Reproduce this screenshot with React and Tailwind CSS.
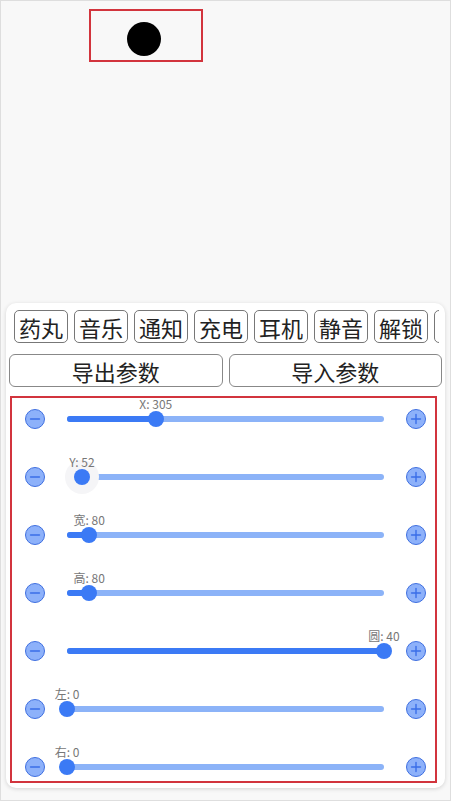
import React from 'react';

const chips = ['药丸', '音乐', '通知', '充电', '耳机', '静音', '解锁', ''];

const sliders = [
  { label: 'X', value: 305, pos: 0.28 },
  { label: 'Y', value: 52, pos: 0.047, halo: true },
  { label: '宽', value: 80, pos: 0.07 },
  { label: '高', value: 80, pos: 0.07 },
  { label: '圆', value: 40, pos: 1 },
  { label: '左', value: 0, pos: 0 },
  { label: '右', value: 0, pos: 0 },
];

const TRACK = 317;

function RoundBtn({ plus }) {
  return (
    <button className="w-5 h-5 shrink-0 rounded-full bg-[#8db1fa] border border-[#3f6fe0] flex items-center justify-center">
      <svg width="12" height="12" viewBox="0 0 12 12">
        <line x1="1.5" y1="6" x2="10.5" y2="6" stroke="#3a6ee8" strokeWidth="1.4" strokeLinecap="round" />
        {plus && <line x1="6" y1="1.5" x2="6" y2="10.5" stroke="#3a6ee8" strokeWidth="1.4" strokeLinecap="round" />}
      </svg>
    </button>
  );
}

function SliderRow({ s }) {
  const x = s.pos * TRACK;
  return (
    <div className="h-[58px] last:h-[36px] pt-[11px] shrink-0">
      <div className="flex items-center h-5">
        <div className="ml-[13px]">
          <RoundBtn />
        </div>
        <div className="relative ml-[22px] w-[317px] h-5 flex items-center">
          <div className="w-full h-[6px] rounded-full bg-[#8cb3f8]" />
          <div className="absolute left-0 h-[6px] rounded-full bg-[#3b7af5]" style={{ width: x }} />
          {s.halo && (
            <div className="absolute w-[34px] h-[34px] rounded-full bg-[#f5f5f7]" style={{ left: x - 17 }} />
          )}
          <div className="absolute w-4 h-4 rounded-full bg-[#3b7af5]" style={{ left: x - 8 }} />
          <div
            className="absolute top-[-12px] text-[12px] leading-[14px] text-[#777] whitespace-nowrap -translate-x-1/2"
            style={{ left: x }}
          >
            {s.label}: {s.value}
          </div>
        </div>
        <div className="ml-[22px]">
          <RoundBtn plus />
        </div>
      </div>
    </div>
  );
}

export default function App() {
  return (
    <div
      className="h-[801px] w-full bg-[#f8f8f8] border border-[#dedede] flex flex-col overflow-hidden"
      style={{ fontFamily: '"Noto Sans CJK SC", "Noto Sans", Roboto, sans-serif' }}
    >
      {/* preview box */}
      <div className="ml-[88px] mt-[8px] w-[114px] h-[53px] border-2 border-[#d2343d]">
        <div className="ml-[36px] mt-[11px] w-[34px] h-[34px] rounded-full bg-black" />
      </div>

      {/* control card */}
      <div className="mt-auto mx-[5px] mb-[12px] bg-white rounded-[10px] shadow-[0_1px_4px_rgba(0,0,0,0.15)] pt-[7px] pb-[5px]">
        <div className="flex gap-[6px] ml-[8px] mr-[6px] overflow-hidden">
          {chips.map((c, i) => (
            <button
              key={i}
              className="shrink-0 w-[54px] h-[33px] border border-[#777] rounded-[5px] text-[22px] leading-none text-[#222] flex items-center justify-center"
            >
              {c}
            </button>
          ))}
        </div>

        <div className="flex gap-[6px] px-[3px] mt-[11px]">
          <button className="flex-1 h-[33px] border border-[#888] rounded-[6px] text-[22px] leading-none text-[#222]">
            导出参数
          </button>
          <button className="flex-1 h-[33px] border border-[#888] rounded-[6px] text-[22px] leading-none text-[#222]">
            导入参数
          </button>
        </div>

        <div className="ml-[4px] mr-[8px] mt-[9px] h-[387px] border-2 border-[#d2343d] flex flex-col">
          {sliders.map((s) => (
            <SliderRow key={s.label} s={s} />
          ))}
        </div>
      </div>
    </div>
  );
}
